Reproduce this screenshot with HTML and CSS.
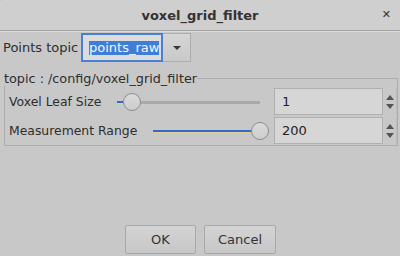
FILE: index.html
```html
<!DOCTYPE html>
<html lang="en">
<head>
    <meta charset="UTF-8">
    <title>voxel_grid_filter</title>
    <link rel="stylesheet" href="styles.css">
</head>
<body>
    <div class="window">
        <div class="titlebar">
            <span class="title">voxel_grid_filter</span>
            <span class="close">&#x2715;</span>
        </div>

        <div class="content">
            <div class="topic-row">
                <label class="topic-label">Points topic</label>
                <div class="combo">
                    <div class="combo-field"><span class="selected">points_raw</span></div>
                    <div class="combo-button"><span class="arrow-down"></span></div>
                </div>
            </div>

            <fieldset class="group">
                <legend>topic : /config/voxel_grid_filter</legend>

                <div class="param-row">
                    <span class="param-label">Voxel Leaf Size</span>
                    <div class="slider">
                        <div class="track"></div>
                        <div class="track-fill" style="width: 6px"></div>
                        <div class="handle" style="left: 8px"></div>
                    </div>
                    <div class="spinbox">
                        <div class="spin-field">1</div>
                        <div class="spin-arrows"><span class="up"></span><span class="down"></span></div>
                    </div>
                </div>

                <div class="param-row">
                    <span class="param-label">Measurement Range</span>
                    <div class="slider">
                        <div class="track"></div>
                        <div class="track-fill" style="width: 100%"></div>
                        <div class="handle" style="left: calc(100% - 7px)"></div>
                    </div>
                    <div class="spinbox">
                        <div class="spin-field">200</div>
                        <div class="spin-arrows"><span class="up"></span><span class="down"></span></div>
                    </div>
                </div>
            </fieldset>

            <div class="buttons">
                <button type="button">OK</button>
                <button type="button">Cancel</button>
            </div>
        </div>
    </div>
</body>
</html>
```

FILE: styles.css
```css
body {
    margin: 0;
    padding: 0;
    width: 400px;
    height: 256px;
    overflow: hidden;
    background-color: #c8c8c8;
    font-family: 'DejaVu Sans', sans-serif;
    font-size: 13px;
    color: #2e2e2e;
}

.window {
    display: flex;
    flex-direction: column;
    height: 256px;
    border-top-left-radius: 4px;
    overflow: hidden;
}

.titlebar {
    position: relative;
    height: 30px;
    display: flex;
    align-items: center;
    justify-content: center;
    background-color: #cfcfcf;
    border-bottom: 1px solid #a2a2a2;
    box-shadow: 0 1px 0 #dadada;
}

.title {
    font-weight: bold;
    font-size: 13px;
    color: #333;
}

.close {
    position: absolute;
    right: 9px;
    top: 8px;
    font-size: 11px;
    font-weight: bold;
    color: #333;
}

.content {
    flex: 1;
    display: flex;
    flex-direction: column;
    padding: 2px 2px 2px 3px;
}

.topic-row {
    display: flex;
    align-items: center;
    height: 29px;
}

.topic-label {
    width: 78px;
}

.combo {
    display: flex;
    height: 29px;
}

.combo-field {
    width: 82px;
    box-sizing: border-box;
    border: 2px solid #4a7fd4;
    background-color: #dcdcdc;
    display: flex;
    align-items: center;
    padding-left: 6px;
}

.selected {
    background-color: #3f7ed8;
    color: #f4f6fb;
    line-height: 14px;
}

.combo-button {
    width: 28px;
    box-sizing: border-box;
    border: 1px solid #adadad;
    border-left: none;
    background: linear-gradient(#d6d6d6, #c9c9c9);
    display: flex;
    align-items: center;
    justify-content: center;
}

.arrow-down {
    width: 0;
    height: 0;
    border-left: 4px solid transparent;
    border-right: 4px solid transparent;
    border-top: 4px solid #3a3a3a;
}

.group {
    margin: 9px 0 0 1px;
    padding: 2px 0 1px 4px;
    border: 1px solid #acacac;
    border-radius: 1px;
    display: flex;
    flex-direction: column;
    gap: 2px;
}

.group legend {
    padding: 0;
    margin-left: -5px;
    font-size: 12.8px;
}

.param-row {
    display: flex;
    align-items: center;
    height: 27px;
}

.param-label {
    margin-right: 16px;
    font-size: 12.4px;
}

.slider {
    position: relative;
    flex: 1;
    height: 18px;
    margin-right: 14px;
}

.track {
    position: absolute;
    left: 0;
    right: 0;
    top: 8px;
    height: 3px;
    background-color: #a9a9a9;
    border-radius: 1px;
}

.track-fill {
    position: absolute;
    left: 0;
    top: 8px;
    height: 2px;
    background-color: #2f6bd0;
    box-shadow: 0 1px 0 #e2cf9a;
}

.handle {
    position: absolute;
    top: 0;
    width: 16px;
    height: 16px;
    margin-left: -2px;
    border: 1px solid #8e8e8e;
    border-radius: 50%;
    background: linear-gradient(#dadada, #cdcdcd);
}

.spinbox {
    display: flex;
    height: 27px;
}

.spin-field {
    width: 109px;
    box-sizing: border-box;
    border: 1px solid #b0b0b0;
    background-color: #d6d6d6;
    display: flex;
    align-items: center;
    padding-left: 7px;
    font-size: 13px;
    color: #222;
}

.spin-arrows {
    width: 13px;
    display: flex;
    flex-direction: column;
    align-items: center;
    justify-content: center;
    gap: 4px;
    border-right: 1px solid #bdbdbd;
}

.spin-arrows .up,
.spin-arrows .down {
    width: 0;
    height: 0;
    border-left: 4px solid transparent;
    border-right: 4px solid transparent;
}

.spin-arrows .up {
    border-bottom: 5px solid #555;
}

.spin-arrows .down {
    border-top: 5px solid #555;
}

.buttons {
    margin-top: auto;
    display: flex;
    justify-content: center;
    gap: 8px;
}

button {
    font-family: 'DejaVu Sans', sans-serif;
    font-size: 13px;
    color: #333;
    height: 29px;
    width: 71px;
    border: 1px solid #a8a8a8;
    border-radius: 2px;
    background: linear-gradient(#d4d4d4, #c7c7c7);
}

button + button {
    width: 72px;
}
```
